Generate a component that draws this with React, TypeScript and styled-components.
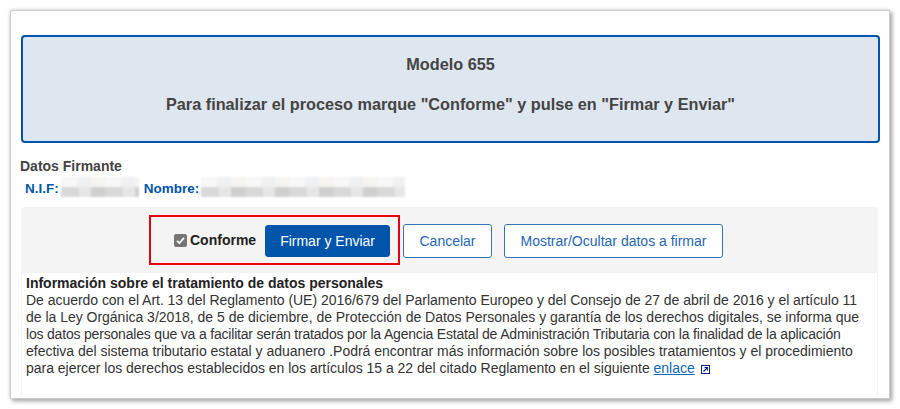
import styled, { createGlobalStyle } from "styled-components"

const GlobalStyle = createGlobalStyle`
    html, body {
        margin:0;
        padding:0;
        background:#fff;
    }
    body {
        font-family:"Liberation Sans", Arial, sans-serif;
        overflow:hidden;
    }
`

const Shot = styled.div`
    width:900px;
    height:409px;
    padding:11px;
    box-sizing:border-box;
`

const Frame = styled.div`
    height:387px;
    background:#fff;
    border-radius:3px 0 0 0;
    box-shadow:0 0 0 1px #ccc, -1px -1px 3px 1px #ddd, 2px 2px 4px 1px #999;
    padding:24px 9px 0 10px;
    box-sizing:border-box;
`

const Banner = styled.div`
    height:108px;
    box-sizing:border-box;
    background:#dee6ef;
    border:2px solid #0055aa;
    border-radius:4px;
    color:#444;
    font-size:16.25px;
    font-weight:bold;
    text-align:center;
    padding-top:18px;
`

const BannerLine = styled.div`
    line-height:19px;
    margin-bottom:21px;
`

const SectionTitle = styled.div`
    margin:15px 0 0 -1px;
    font-size:14px;
    line-height:16px;
    font-weight:bold;
    color:#444;
`

const SignerRow = styled.div`
    display:flex;
    align-items:flex-end;
    height:20px;
    margin-top:3px;
    padding-left:4px;
    font-size:13.5px;
    line-height:16px;
    font-weight:bold;
    color:#0055aa;
`

const Redacted = styled.span<{ $width: number }>`
    display:block;
    width:${({ $width }) => $width}px;
    height:20px;
    margin:0 5px 0 2px;
    filter:blur(1px);
    background:
        repeating-linear-gradient(90deg, #f7f7f7 0 16px, #eef0f2 16px 30px, #f6f4f0 30px 44px) top / 100% 50% no-repeat,
        repeating-linear-gradient(90deg, #d8d8d8 0 18px, #e6e6e6 18px 30px, #cfcfcf 30px 44px) bottom / 100% 50% no-repeat;
`

const Content = styled.div`
    margin-top:10px;
    margin-right:2px;
    border-left:1px solid #f4f4f4;
    border-right:1px solid #f4f4f4;
    height:189px;
`

const Actions = styled.div`
    height:66px;
    background:#f4f4f4;
    border-radius:3px 3px 0 0;
    display:flex;
    align-items:center;
    padding-left:127px;
    box-sizing:border-box;
`

const Highlight = styled.div`
    width:251px;
    height:50px;
    box-sizing:border-box;
    border:2px solid #e8000d;
    display:flex;
    align-items:center;
    padding-left:23px;
    margin-right:3px;
`

const CheckLabel = styled.label`
    display:flex;
    align-items:center;
    font-size:14px;
    font-weight:bold;
    color:#222;
    margin-right:9px;
`

const CheckBox = styled.span`
    display:flex;
    align-items:center;
    justify-content:center;
    width:13px;
    height:13px;
    border-radius:2px;
    background:#757575;
    margin-right:3px;
`

const Button = styled.button<{ $primary?: boolean }>`
    height:${({ $primary }) => ($primary ? "32px" : "34px")};
    box-sizing:border-box;
    margin-top:2px;
    border:1px solid ${({ $primary }) => ($primary ? "#0055aa" : "#2f74bd")};
    border-radius:3px;
    background:${({ $primary }) => ($primary ? "#0055aa" : "#fff")};
    color:${({ $primary }) => ($primary ? "#fff" : "#1f66b3")};
    font-family:inherit;
    font-size:14px;
    padding:0 ${({ $primary }) => ($primary ? "14px" : "15.5px")};
    margin-right:${({ $primary }) => ($primary ? "0" : "12px")};
`

const Info = styled.div`
    padding:2px 0 0 4px;
    font-size:14px;
    line-height:17px;
    color:#333;
`

const InfoTitle = styled.div`
    font-weight:bold;
    color:#222;
`

const InfoLine = styled.div<{ $tracking: number }>`
    white-space:nowrap;
    letter-spacing:${({ $tracking }) => $tracking}px;
`

const Link = styled.a`
    color:#0d68b5;
    text-decoration:underline;
`

const ExternalIcon = styled.svg`
    width:9px;
    height:9px;
    margin-left:6px;
    vertical-align:-1px;
`

export default function App() {
    return (
        <>
            <GlobalStyle />
            <Shot>
                <Frame>
                    <Banner>
                        <BannerLine>Modelo 655</BannerLine>
                        <BannerLine>Para finalizar el proceso marque "Conforme" y pulse en "Firmar y Enviar"</BannerLine>
                    </Banner>
                    <SectionTitle>Datos Firmante</SectionTitle>
                    <SignerRow>
                        N.I.F:
                        <Redacted $width={78} />
                        Nombre:
                        <Redacted $width={204} />
                    </SignerRow>
                    <Content>
                        <Actions>
                            <Highlight>
                                <CheckLabel>
                                    <CheckBox>
                                        <svg width="9" height="9" viewBox="0 0 9 9">
                                            <path d="M1 4.8 L3.4 7 L8 1.8" fill="none" stroke="#fff" strokeWidth="1.8" />
                                        </svg>
                                    </CheckBox>
                                    Conforme
                                </CheckLabel>
                                <Button $primary>Firmar y Enviar</Button>
                            </Highlight>
                            <Button>Cancelar</Button>
                            <Button>Mostrar/Ocultar datos a firmar</Button>
                        </Actions>
                        <Info>
                            <InfoTitle>Información sobre el tratamiento de datos personales</InfoTitle>
                            <InfoLine $tracking={-0.035}>De acuerdo con el Art. 13 del Reglamento (UE) 2016/679 del Parlamento Europeo y del Consejo de 27 de abril de 2016 y el artículo 11</InfoLine>
                            <InfoLine $tracking={-0.015}>de la Ley Orgánica 3/2018, de 5 de diciembre, de Protección de Datos Personales y garantía de los derechos digitales, se informa que</InfoLine>
                            <InfoLine $tracking={-0.19}>los datos personales que va a facilitar serán tratados por la Agencia Estatal de Administración Tributaria con la finalidad de la aplicación</InfoLine>
                            <InfoLine $tracking={-0.02}>efectiva del sistema tributario estatal y aduanero .Podrá encontrar más información sobre los posibles tratamientos y el procedimiento</InfoLine>
                            <InfoLine $tracking={-0.02}>
                                para ejercer los derechos establecidos en los artículos 15 a 22 del citado Reglamento en el siguiente <Link href="#">enlace</Link>
                                <ExternalIcon viewBox="0 0 9 9">
                                    <rect x="0.5" y="0.5" width="8" height="8" fill="none" stroke="#10218b" />
                                    <path d="M2.5 6.5 L6 3 M3.5 2.5 H6.5 V5.5" fill="none" stroke="#10218b" strokeWidth="1.1" />
                                </ExternalIcon>
                            </InfoLine>
                        </Info>
                    </Content>
                </Frame>
            </Shot>
        </>
    )
}
